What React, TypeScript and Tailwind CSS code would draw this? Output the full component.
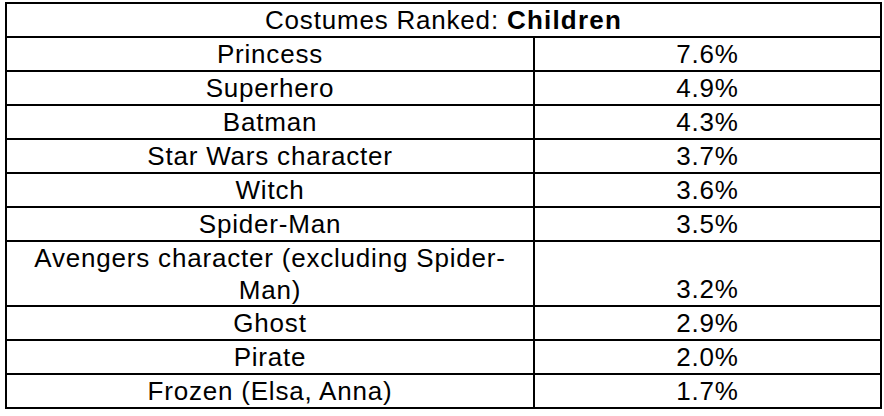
const rows: { name: React.ReactNode; value: string; tall?: boolean }[] = [
  { name: "Princess", value: "7.6%" },
  { name: "Superhero", value: "4.9%" },
  { name: "Batman", value: "4.3%" },
  { name: "Star Wars character", value: "3.7%" },
  { name: "Witch", value: "3.6%" },
  { name: "Spider-Man", value: "3.5%" },
  {
    name: (
      <>
        Avengers character (excluding Spider-
        <br />
        Man)
      </>
    ),
    value: "3.2%",
    tall: true,
  },
  { name: "Ghost", value: "2.9%" },
  { name: "Pirate", value: "2.0%" },
  { name: "Frozen (Elsa, Anna)", value: "1.7%" },
];

export default function App() {
  return (
    <div className="h-[416px] w-[884px] bg-white pl-[5px] pt-[2px] font-['Liberation_Sans',Arial,sans-serif] text-[26px] leading-[32px] tracking-[0.8px] text-black">
      <div className="flex w-[877px] flex-col border-2 border-black">
        <div className="flex h-[32px] items-center justify-center">
          <span>
            Costumes Ranked: <b className="font-bold tracking-[1.2px]">Children</b>
          </span>
        </div>
        {rows.map((row, i) => (
          <div
            key={i}
            className={`flex border-t-2 border-black ${row.tall ? "h-[65px]" : "h-[34px]"}`}
          >
            <div className="flex w-[528px] shrink-0 items-center justify-center border-r-2 border-black text-center">
              <span>{row.name}</span>
            </div>
            <div className="flex flex-1 items-end justify-center">
              <span>{row.value}</span>
            </div>
          </div>
        ))}
      </div>
    </div>
  );
}
